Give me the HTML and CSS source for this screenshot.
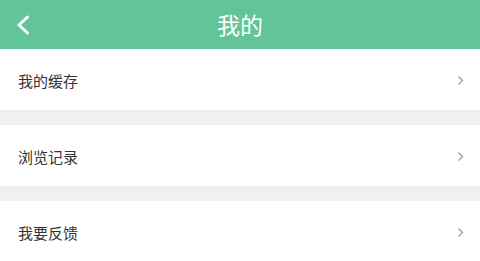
FILE: index.html
```html
<!DOCTYPE html>
<html lang="zh">
<head>
  <meta charset="UTF-8" />
  <meta name="viewport" content="width=device-width, initial-scale=1.0"/>
  <title>我的</title>
  <link rel="stylesheet" href="styles.css">
</head>
<body>

  <div class="top-bar">
    <button class="back-btn">
      <svg width="14" height="20" viewBox="0 0 14 20">
        <path d="M11.5 2 L3 10 L11.5 18" fill="none" stroke="#fff" stroke-width="3" stroke-linecap="round" stroke-linejoin="round"/>
      </svg>
    </button>
    <h1 class="title">我的</h1>
  </div>

  <div class="menu">
    <div class="menu-item">
      <span class="label">我的缓存</span>
      <span class="arrow">
        <svg width="7" height="11" viewBox="0 0 7 11"><path d="M1.5 1.5 L5.5 5.5 L1.5 9.5" fill="none" stroke="#999" stroke-width="1.3"/></svg>
      </span>
    </div>
    <div class="spacer"></div>
    <div class="menu-item">
      <span class="label">浏览记录</span>
      <span class="arrow">
        <svg width="7" height="11" viewBox="0 0 7 11"><path d="M1.5 1.5 L5.5 5.5 L1.5 9.5" fill="none" stroke="#999" stroke-width="1.3"/></svg>
      </span>
    </div>
    <div class="spacer"></div>
    <div class="menu-item">
      <span class="label">我要反馈</span>
      <span class="arrow">
        <svg width="7" height="11" viewBox="0 0 7 11"><path d="M1.5 1.5 L5.5 5.5 L1.5 9.5" fill="none" stroke="#999" stroke-width="1.3"/></svg>
      </span>
    </div>
  </div>

</body>
</html>
```

FILE: styles.css
```css
* {
  box-sizing: border-box;
}

body {
  margin: 0;
  padding: 0;
  font-family: 'Noto Sans CJK SC', 'Noto Sans', sans-serif;
  background: #fff;
  overflow: hidden;
}

.top-bar {
  height: 49px;
  background: #63c49a;
  display: flex;
  align-items: center;
  justify-content: center;
  position: relative;
}

.back-btn {
  position: absolute;
  left: 15px;
  top: 14px;
  border: none;
  background: transparent;
  padding: 0;
  width: 16px;
  height: 22px;
  display: flex;
  align-items: center;
  justify-content: center;
}

.title {
  margin: 0;
  color: #fff;
  font-size: 23px;
  font-weight: 400;
  line-height: 1;
}

.menu {
  display: flex;
  flex-direction: column;
}

.menu-item {
  height: 61px;
  display: flex;
  align-items: center;
  justify-content: space-between;
  padding: 1px 16px 0 18px;
  background: #fff;
}

.label {
  font-size: 15px;
  color: #333;
  line-height: 1;
}

.arrow {
  display: flex;
  align-items: center;
}

.spacer {
  height: 15px;
  background: #f0f0f0;
}
```
